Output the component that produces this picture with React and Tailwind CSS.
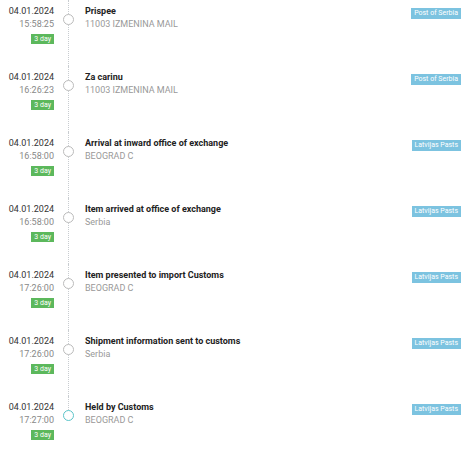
import React from 'react';

const events = [
  { date: '04.01.2024', time: '15:58:25', title: 'Prispee', place: '11003 IZMENINA MAIL', source: 'Post of Serbia' },
  { date: '04.01.2024', time: '16:26:23', title: 'Za carinu', place: '11003 IZMENINA MAIL', source: 'Post of Serbia' },
  { date: '04.01.2024', time: '16:58:00', title: 'Arrival at inward office of exchange', place: 'BEOGRAD C', source: 'Latvijas Pasts' },
  { date: '04.01.2024', time: '16:58:00', title: 'Item arrived at office of exchange', place: 'Serbia', source: 'Latvijas Pasts' },
  { date: '04.01.2024', time: '17:26:00', title: 'Item presented to import Customs', place: 'BEOGRAD C', source: 'Latvijas Pasts' },
  { date: '04.01.2024', time: '17:26:00', title: 'Shipment information sent to customs', place: 'Serbia', source: 'Latvijas Pasts' },
  { date: '04.01.2024', time: '17:27:00', title: 'Held by Customs', place: 'BEOGRAD C', source: 'Latvijas Pasts', last: true }
];

const Row = ({ ev }) => (
  <div className="flex h-[66px]">
    <div className="w-[54px] shrink-0 pt-[5px] text-right text-[9px] leading-[13px]">
      <div className="text-[#333]">{ev.date}</div>
      <div className="text-[#888]">{ev.time}</div>
      <span className="mt-[3px] inline-block bg-[#5cb85c] px-[3px] text-[7px] leading-[10px] text-white">3 day</span>
    </div>
    <div className="relative w-[31px] shrink-0">
      <div
        className={`absolute left-[14px] top-0 border-l border-dotted border-[#c8ccd0] ${ev.last ? 'h-[14px]' : 'h-full'}`}
      />
      <div
        className={`absolute left-[9px] top-[14px] h-[11px] w-[11px] rounded-full border bg-white ${
          ev.last ? 'border-[#5bc4c9]' : 'border-[#bbb]'
        }`}
      />
    </div>
    <div className="flex-1 pt-[5px] text-[9px] leading-[13px]">
      <div className="font-bold text-[#222]">{ev.title}</div>
      <div className="text-[#999]">{ev.place}</div>
    </div>
    <div className="pr-[8px] pt-[8px]">
      <span className="block bg-[#7cc3e0] px-[3px] text-[7px] leading-[11px] text-white">{ev.source}</span>
    </div>
  </div>
);

export default function App() {
  return (
    <div className="w-[469px] bg-white" style={{ fontFamily: 'Roboto, sans-serif' }}>
      {events.map((ev, i) => (
        <Row key={i} ev={ev} />
      ))}
    </div>
  );
}
